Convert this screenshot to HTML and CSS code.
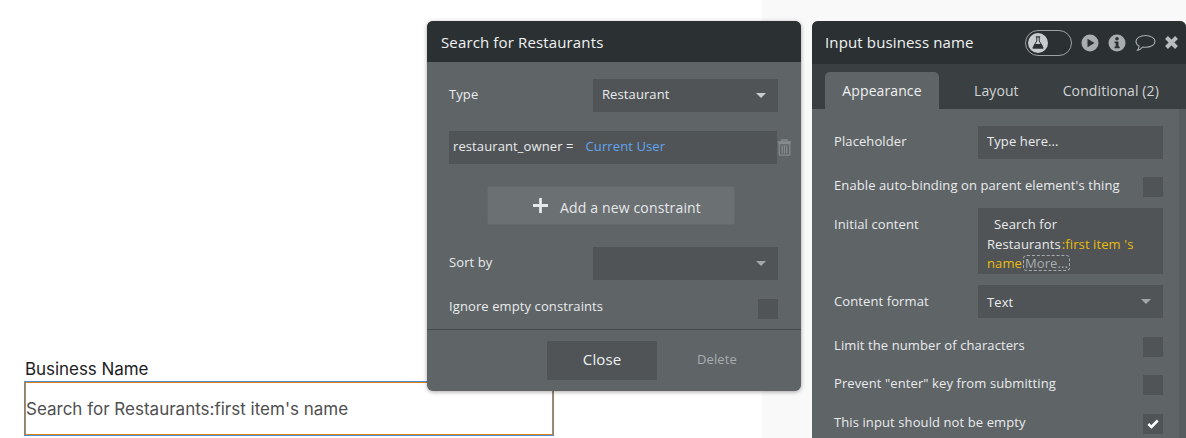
FILE: index.html
```html
<!DOCTYPE html>
<html lang="en">
<head>
<meta charset="utf-8">
<title>Input business name</title>
<link rel="stylesheet" href="styles.css">
</head>
<body>
<div class="canvas">
  <div class="page-strip"></div>
  <div class="field">
    <div class="field-label">Business Name</div>
    <div class="field-input">Search for Restaurants:first item's name</div>
  </div>

  <section class="panel search-panel">
    <header class="panel-head search-head">Search for Restaurants</header>
    <div class="search-body">
      <div class="row type-row">
        <span class="row-label">Type</span>
        <div class="select"><span>Restaurant</span><i class="caret"></i></div>
      </div>
      <div class="constraint-row">
        <div class="constraint"><span>restaurant_owner =</span><span class="link">Current User</span></div>
        <svg class="trash" width="15" height="17" viewBox="0 0 15 17"><path d="M5 2.500V1h5v1.500M.8 3h13.400M2.200 4.500h10.600V15a1.200 1.200 0 0 1-1.200 1.200H3.400A1.200 1.200 0 0 1 2.200 15ZM5.200 6.300v8.200M7.500 6.300v8.200M9.800 6.300v8.200" fill="none" stroke="#868b8e" stroke-width="1.300"/></svg>
      </div>
      <div class="add-wrap">
        <div class="add-btn"><svg width="15" height="15" viewBox="0 0 15 15"><path d="M7.500 0v15M0 7.500h15" stroke="#e6e8e9" stroke-width="2.800"/></svg><span>Add a new constraint</span></div>
      </div>
      <div class="row sort-row">
        <span class="row-label">Sort by</span>
        <div class="select"><span></span><i class="caret dim"></i></div>
      </div>
      <div class="row ignore-row">
        <span class="row-label">Ignore empty constraints</span>
        <div class="check"></div>
      </div>
    </div>
    <footer class="search-foot">
      <div class="close-btn">Close</div>
      <div class="delete-btn">Delete</div>
    </footer>
  </section>

  <section class="panel props-panel">
    <header class="panel-head props-head">
      <span class="props-title">Input business name</span>
      <div class="toggle"><span class="knob"><svg width="12" height="13" viewBox="0 0 12 13"><path d="M3.800 .8h4.400" stroke="#2b3133" stroke-width="1.200" fill="none"/><path d="M4.800 1v4L2 9.500h8L7.200 5V1" fill="none" stroke="#2b3133" stroke-width="1"/><path d="M2.600 8h6.800l2 3.400a.9.900 0 0 1-.8 1.300H1.400a.9.900 0 0 1-.8-1.300Z" fill="#2b3133"/></svg></span></div>
      <svg class="head-icon" width="18" height="18" viewBox="0 0 18 18"><circle cx="9" cy="9" r="8.500" fill="#a9adb0"/><path d="M6.500 4.800v8.400L13.500 9Z" fill="#2b3133"/></svg>
      <svg class="head-icon" width="18" height="18" viewBox="0 0 18 18"><circle cx="9" cy="9" r="8.500" fill="#a9adb0"/><circle cx="9" cy="4.700" r="1.800" fill="#2b3133"/><path d="M6.500 7.500h4v5h1.200v1.700H6.500v-1.700h1.200V9.200H6.500Z" fill="#2b3133"/></svg>
      <svg class="head-icon" width="21" height="18" viewBox="0 0 21 18"><path d="M10.500 1.500c5 0 9.500 2.300 9.500 6 0 3.600-4.500 5.800-9.500 5.800-1 0-2-.1-2.900-.3C6.500 14.500 4.500 16 2.500 16.300c1-1.200 1.600-2.500 1.600-4.300C2 10.900 1 9.300 1 7.500c0-3.700 4.500-6 9.500-6Z" fill="none" stroke="#a9adb0" stroke-width="1.100"/></svg>
      <svg class="head-icon close-x" width="15" height="15" viewBox="0 0 15 15"><path d="M2.500 2.500l10 10M12.500 2.500l-10 10" stroke="#b9bcbe" stroke-width="4"/></svg>
    </header>
    <nav class="tabs">
      <div class="tab active">Appearance</div>
      <div class="tab layout-tab">Layout</div>
      <div class="tab cond-tab">Conditional (2)</div>
    </nav>
    <div class="props-scroll">
      <div class="props-body">
        <div class="row placeholder-row">
          <span class="row-label">Placeholder</span>
          <div class="text-box">Type here...</div>
        </div>
        <div class="row bind-row">
          <span class="row-label">Enable auto-binding on parent element's thing</span>
          <div class="check"></div>
        </div>
        <div class="row initial-row">
          <span class="row-label">Initial content</span>
          <div class="rich-box"><span class="indent">Search for</span><br><span>Restaurants</span><span class="dyn first-dyn">:first item 's</span><br><span class="dyn">name</span><span class="more">More...</span></div>
        </div>
        <div class="row format-row">
          <span class="row-label">Content format</span>
          <div class="select format-select"><span>Text</span><i class="caret dim"></i></div>
        </div>
        <div class="row limit-row">
          <span class="row-label">Limit the number of characters</span>
          <div class="check"></div>
        </div>
        <div class="row prevent-row">
          <span class="row-label">Prevent "enter" key from submitting</span>
          <div class="check"></div>
        </div>
        <div class="row empty-row">
          <span class="row-label">This input should not be empty</span>
          <div class="check"><svg width="12" height="10" viewBox="0 0 12 10"><path d="M1.300 5l3.200 3L10.700 1.500" fill="none" stroke="#fff" stroke-width="2.600"/></svg></div>
        </div>
      </div>
      <div class="scrollbar"></div>
    </div>
  </section>
</div>
</body>
</html>
```
FILE: styles.css
```css
* { box-sizing: border-box; }
html, body { margin: 0; padding: 0; height: 100%; overflow: hidden; background: #fff; }
.canvas { position: relative; width: 1186px; height: 438px; overflow: hidden; font-family: "Open Sans", sans-serif; font-size: 13px; letter-spacing: .1px; color: #e9ebec; }
.page-strip { position: absolute; left: 762px; top: 0; width: 424px; height: 438px; background: #f9f9f9; }

.field { position: absolute; left: 24px; top: 359px; width: 530px; font-family: "Inter", sans-serif; letter-spacing: 0; }
.field-label { font-size: 17px; line-height: 20px; height: 22px; padding-left: 1px; color: #1d1d1f; letter-spacing: -0.050px; }
.field-input { height: 55px; border: 2px solid #e07f13; outline: 1px solid #4a90d9; outline-offset: -1px; display: flex; align-items: center; font-size: 17px; color: #4f4f4f; }

.panel { position: absolute; background: #5f6467; border-radius: 6px 6px 0 0; overflow: hidden; }
.panel-head { background: #2b3133; color: #f0f1f2; font-size: 15px; letter-spacing: .14px; display: flex; align-items: center; }

.search-panel { left: 427px; top: 21px; width: 374px; height: 370px; border-radius: 6px; box-shadow: 0 1px 4px rgba(0,0,0,.35); display: flex; flex-direction: column; }
.search-head { height: 41px; padding-left: 14px; flex: none; }
.search-body { padding: 17px 23px 0 22px; flex: 1; }
.row { display: flex; justify-content: space-between; align-items: flex-start; }
.row-label { line-height: 18px; }
.select { width: 185px; height: 33px; background: #505457; display: flex; align-items: center; justify-content: space-between; padding: 0 12px 3px 9px; color: #e9ebec; flex: none; }
.format-select { padding-bottom: 0; }
.caret { width: 0; height: 0; border-left: 5px solid transparent; border-right: 5px solid transparent; border-top: 5px solid #c9cccd; margin-top: 3px; }
.caret.dim { border-top-color: #a3a7a9; }
.format-select .caret { margin-top: 0; }
.type-row .row-label { margin-top: 6px; }
.constraint-row { display: flex; align-items: center; margin-top: 19px; width: 351px; }
.constraint { width: 328px; height: 33px; background: #505457; display: flex; align-items: center; gap: 12px; padding: 0 0 3px 4px; flex: none; }
.link { color: #62a5ef; }
.trash { margin-left: 0; flex: none; }
.add-wrap { margin: 22px 0 0 38px; }
.add-btn { width: 248px; height: 39px; background: #6b7073; border-radius: 2px; display: flex; align-items: center; justify-content: center; gap: 12px; font-size: 14px; letter-spacing: .15px; color: #e6e8e9; padding: 3px 0 0 12px; border: 1px solid #64696c; }
.add-btn svg { margin-top: -4px; }
.sort-row { margin-top: 22px; }
.sort-row .row-label { margin-top: 6px; }
.ignore-row { margin-top: 19px; align-items: center; }
.ignore-row .row-label { margin-top: -7px; }
.check { width: 20px; height: 20px; background: #505457; flex: none; display: flex; align-items: center; justify-content: center; }
.search-foot { height: 62px; border-top: 1px solid #46494c; flex: none; display: flex; align-items: flex-start; padding: 11px 0 0 120px; }
.close-btn { width: 110px; height: 39px; background: #505457; display: flex; align-items: center; justify-content: center; font-size: 15px; padding-bottom: 4px; color: #eef0f0; }
.delete-btn { margin-left: 40px; height: 39px; display: flex; align-items: center; padding-bottom: 4px; color: #a9adaf; }

.props-panel { left: 812px; top: 21px; width: 374px; height: 417px; display: flex; flex-direction: column; }
.props-head { height: 43px; flex: none; padding: 0 0 2px 13px; }
.props-title { width: 200px; flex: none; }
.toggle { width: 47px; height: 26px; margin-left: 0; border: 1px solid #9da1a3; border-radius: 13px; padding: 2px; flex: none; margin-top: 2px; }
.knob { width: 20px; height: 20px; background: #c8cccf; border-radius: 50%; display: flex; align-items: center; justify-content: center; }
.head-icon { flex: none; margin: 2px 0 0 9px; }
.head-icon.close-x { margin-left: 8px; }
.tabs { height: 45px; background: #3a3f42; flex: none; display: flex; align-items: flex-end; padding-left: 13px; font-size: 14px; letter-spacing: .1px; color: #d0d3d4; }
.tab { height: 37px; display: flex; align-items: center; justify-content: center; padding-bottom: 1px; }
.tab.active { width: 114px; background: #5f6467; border-radius: 5px 5px 0 0; color: #eef0f0; }
.layout-tab { margin-left: 35px; }
.cond-tab { margin-left: 44px; }
.props-scroll { flex: 1; display: flex; min-height: 0; }
.props-body { flex: 1; padding: 17px 16px 0 22px; }
.scrollbar { width: 7px; background: #575c5f; flex: none; }
.text-box { width: 185px; height: 33px; background: #505457; display: flex; align-items: center; padding: 0 0 3px 9px; }
.placeholder-row .row-label { margin-top: 6px; }
.bind-row { margin-top: 18px; }
.bind-row .row-label { margin-top: -1px; }
.initial-row { margin-top: 11px; }
.initial-row .row-label { margin-top: 7px; }
.rich-box { width: 185px; height: 66px; background: #505457; padding: 7px 9px 0; line-height: 19.500px; overflow: hidden; }
.indent { margin-left: 7px; }
.dyn { color: #e9bb0b; }
.first-dyn { margin-left: 1px; }
.more { border: 1px dashed #a9adaf; border-radius: 4px; color: #a9adaf; padding: 0 1px; margin-left: 1px; line-height: 14px; display: inline-block; }
.format-row { margin-top: 11px; }
.format-row .row-label { margin-top: 7px; }
.limit-row { margin-top: 19px; }
.limit-row .row-label { margin-top: -1px; }
.prevent-row { margin-top: 18px; }
.prevent-row .row-label { margin-top: -1px; }
.empty-row { margin-top: 19px; }
.empty-row .row-label { margin-top: -1px; }
```
